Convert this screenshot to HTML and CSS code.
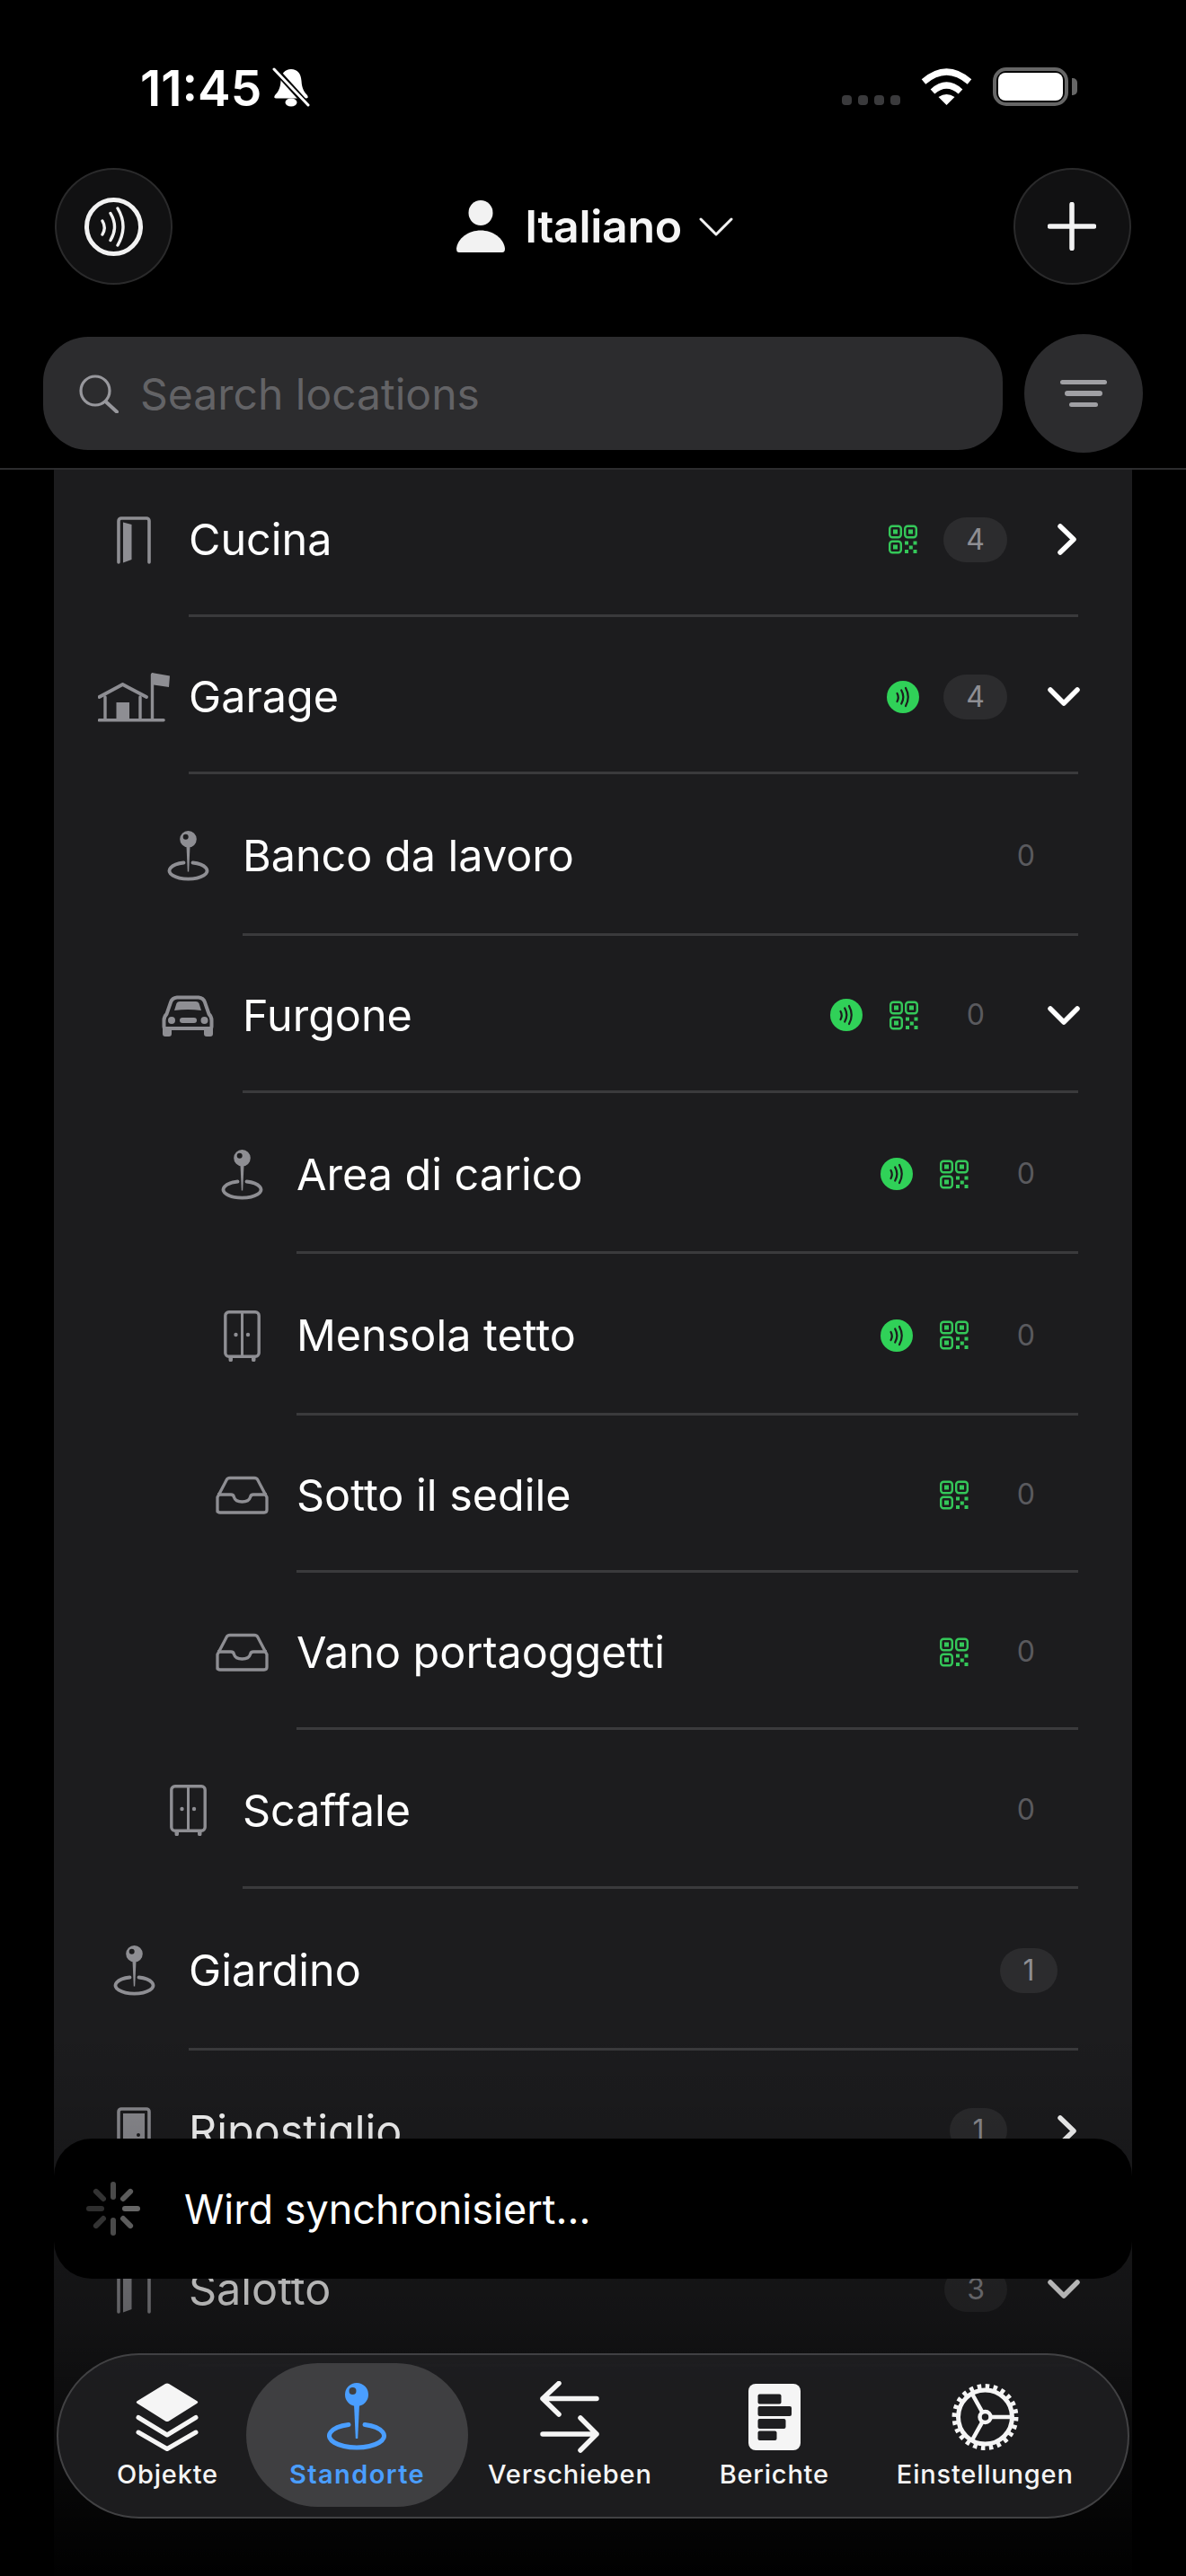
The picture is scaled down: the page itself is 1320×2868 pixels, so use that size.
FILE: index.html
```html
<!DOCTYPE html>
<html lang="it">
<head>
    <meta charset="UTF-8">
    <meta name="viewport" content="width=device-width, initial-scale=1.0">
    <title>Locations</title>
    <link rel="stylesheet" href="styles.css">
</head>
<body>
    <!-- shared icons -->
    <svg class="defs" aria-hidden="true">
        <symbol id="i-door" viewBox="0 0 38 53">
            <path d="M2 51V5a3 3 0 0 1 3-3h28a3 3 0 0 1 3 3v46" fill="none" stroke="currentColor" stroke-width="3.6" stroke-linecap="round"/>
            <path d="M7 6.5 16.5 9v39L7 51.5z" fill="currentColor"/>
        </symbol>
        <symbol id="i-door-closed" viewBox="0 0 38 53">
            <path d="M2 51V5a3 3 0 0 1 3-3h28a3 3 0 0 1 3 3v46" fill="none" stroke="currentColor" stroke-width="3.6"/>
            <path fill-rule="evenodd" d="M7 7h24v46H7zM24 29a2 2 0 1 0 0 4 2 2 0 0 0 0-4z" fill="currentColor"/>
        </symbol>
        <symbol id="i-garage" viewBox="0 0 80 55">
            <g fill="none" stroke="currentColor" stroke-linecap="round">
                <path d="M1.5 27 27.5 13 54 27" stroke-width="3.8" stroke-linejoin="round"/>
                <path d="M8 27v25M47 27v25M60.5 2v50" stroke-width="3.4"/>
                <path d="M1.5 52.8H73" stroke-width="3.6"/>
            </g>
            <path d="M20.5 33H35v19H20.5zM60 0l20 3.500-1 12.500-17-2.500z" fill="currentColor"/>
        </symbol>
        <symbol id="i-pin" viewBox="0 0 47 56">
            <path fill-rule="evenodd" d="M23.500 0a9.300 9.300 0 1 1 0 18.600 9.300 9.300 0 0 1 0-18.600zM20.700 3.800a3 3 0 1 0 0 6 3 3 0 0 0 0-6z" fill="currentColor"/>
            <path d="M21.500 17h4l-1.300 28.500h-1.400z" fill="currentColor"/>
            <path d="M18.500 35.500A21 9.200 0 1 0 28.500 35.500" fill="none" stroke="currentColor" stroke-width="3.800" stroke-linecap="round"/>
        </symbol>
        <symbol id="i-wardrobe" viewBox="0 0 41 57">
            <rect x="1.800" y="1.800" width="37.400" height="49.500" rx="4" fill="none" stroke="currentColor" stroke-width="3.400"/>
            <path d="M20.500 2v49" stroke="currentColor" stroke-width="3"/>
            <circle cx="13.500" cy="27" r="2.200" fill="currentColor"/>
            <circle cx="27" cy="27" r="2.200" fill="currentColor"/>
            <path d="M5.500 51h4.500v4a1.800 1.800 0 0 1-4.500 0zM31 51h4.500v4a1.800 1.800 0 0 1-4.500 0z" fill="currentColor"/>
        </symbol>
        <symbol id="i-tray" viewBox="0 0 59 43">
            <g fill="none" stroke="currentColor" stroke-width="3.300" stroke-linejoin="round">
                <path d="M2 40V24L12 5q1-2.500 4-2.500h27q3 0 4 2.500l10 19v14q0 3-3 3H5q-3 0-3-3z"/>
                <path d="M2 21h15q3 0 3.500 3 1.500 5 9 5t9-5q.5-3 3.500-3h15"/>
            </g>
        </symbol>
        <symbol id="i-car" viewBox="0 0 58 46">
            <path d="M2.500 28q0-4 3-7L10 8q1.500-5 7-5.500h24q5.500.5 7 5.500l4.500 13q3 3 3 7v7q0 2-2.500 2H5q-2.500 0-2.500-2z" fill="none" stroke="currentColor" stroke-width="4"/>
            <path d="M14 17l2.500-8q1-2 3.500-2h18q2.500 0 3.500 2l2.500 8q-15-2-30 0z" fill="currentColor"/>
            <circle cx="11" cy="28" r="4" fill="currentColor"/>
            <circle cx="47.500" cy="28" r="4" fill="currentColor"/>
            <rect x="20" y="25" width="19" height="6" rx="3" fill="currentColor"/>
            <path d="M1 36h10v7q0 3-3 3H4q-3 0-3-3zM47 36h10v7q0 3-3 3h-4q-3 0-3-3z" fill="currentColor"/>
        </symbol>
        <symbol id="i-qr" viewBox="0 0 32 32">
            <g fill="none" stroke="currentColor" stroke-width="2.400">
                <rect x="1.200" y="1.200" width="12.600" height="12.600" rx="3"/>
                <rect x="18.200" y="1.200" width="12.600" height="12.600" rx="3"/>
                <rect x="1.200" y="18.200" width="12.600" height="12.600" rx="3"/>
            </g>
            <path d="M5 5h5v5H5zM22 5h5v5h-5zM5 22h5v5H5zM18 18h4v4h-4zM27.500 18h4v4h-4zM22.800 23h4v4h-4zM18 27.500h4v4h-4zM27.500 27.500h4v4h-4z" fill="currentColor"/>
        </symbol>
        <symbol id="i-nfc" viewBox="0 0 36 36">
            <circle cx="18" cy="18" r="18" fill="#30d158"/>
            <g fill="none" stroke="#1c1c1e" stroke-width="2.200" stroke-linecap="round">
                <path d="M11.500 14q2.500 4.500 0 9M16.200 10.500q4.300 7.500 0 15M21 8q5.500 10 0 20"/>
            </g>
        </symbol>
        <symbol id="i-chev-right" viewBox="0 0 21 35">
            <path d="M3 3l15 14.500L3 32" fill="none" stroke="currentColor" stroke-width="5.500" stroke-linecap="round" stroke-linejoin="round"/>
        </symbol>
        <symbol id="i-chev-down" viewBox="0 0 36 21">
            <path d="M3 3l15 15L33 3" fill="none" stroke="currentColor" stroke-width="5.500" stroke-linecap="round" stroke-linejoin="round"/>
        </symbol>
    </svg>

    <div class="screen">
        <header class="header">
            <div class="status">
                <div class="status-left">
                    <span class="time">11:45</span>
                    <svg class="bell" viewBox="0 0 42 44">
                        <path d="M21 2c-7 0-11 5-11.500 13C9 24 6 28 3 31q-2 3.500 1.500 3.500h33q3.500 0 1.500-3.500c-3-3-6-7-6.500-16C32 7 28 2 21 2z" fill="#fff"/>
                        <ellipse cx="21" cy="39" rx="6.500" ry="4.500" fill="#fff"/>
                        <path d="M1 0l40 44" stroke="#000" stroke-width="7"/>
                        <path d="M2 2l38 40" stroke="#fff" stroke-width="3" stroke-linecap="round"/>
                    </svg>
                </div>
                <div class="status-right">
                    <div class="signal"><i></i><i></i><i></i><i></i></div>
                    <svg class="wifi" viewBox="0 0 57 41">
                        <g fill="none" stroke="#fff" stroke-width="7">
                            <path d="M3 15Q28.500-7 54 15"/>
                            <path d="M13 26Q28.500 12 44 26"/>
                        </g>
                        <path d="M19.500 32q9-6 18 0l-9 9z" fill="#fff"/>
                    </svg>
                    <div class="battery"><div class="battery-fill"></div></div>
                </div>
            </div>

            <div class="topbar">
                <button class="round-btn">
                    <svg class="nfc-icon" viewBox="0 0 65 65">
                        <circle cx="32.500" cy="32.500" r="30" fill="none" stroke="#f2f2f2" stroke-width="5"/>
                        <path d="M20 26q4.500 7.500 0 15M29 17.500q9 15 0 30M37 12q12 20 0 41" fill="none" stroke="#f2f2f2" stroke-width="3.400" stroke-linecap="round"/>
                    </svg>
                </button>
                <div class="title">
                    <svg class="person" viewBox="0 0 54 58">
                        <ellipse cx="27" cy="14" rx="13.500" ry="14" fill="#f2f2f2"/>
                        <path d="M3 58q-3 0-3-4c1-12 14-20.500 27-20.500S53 42 54 54q0 4-3 4z" fill="#f2f2f2"/>
                    </svg>
                    <span>Italiano</span>
                    <svg class="title-chev" viewBox="0 0 38 21">
                        <path d="M2 2l17 17L36 2" fill="none" stroke="#f2f2f2" stroke-width="3" stroke-linecap="round" stroke-linejoin="round"/>
                    </svg>
                </div>
                <button class="round-btn">
                    <svg class="plus" viewBox="0 0 54 54">
                        <path d="M2.500 27h49M27 2.500v49" fill="none" stroke="#f2f2f2" stroke-width="5.500" stroke-linecap="round"/>
                    </svg>
                </button>
            </div>

            <div class="search-row">
                <div class="search">
                    <svg class="search-icon" viewBox="0 0 44 43">
                        <circle cx="18" cy="18" r="16" fill="none" stroke="#98989d" stroke-width="3.200"/>
                        <path d="M29.500 30 42 41.500" stroke="#98989d" stroke-width="4" stroke-linecap="round"/>
                    </svg>
                    <span>Search locations</span>
                </div>
                <button class="filter-btn">
                    <span class="filter-bar bar-1"></span>
                    <span class="filter-bar bar-2"></span>
                    <span class="filter-bar bar-3"></span>
                </button>
            </div>
        </header>

        <main class="list">
            <div class="row">
                <div class="row-icon"><svg class="ic-door"><use href="#i-door"/></svg></div>
                <div class="row-main">
                    <span class="name">Cucina</span>
                    <svg class="qr"><use href="#i-qr"/></svg>
                    <span class="count filled">4</span>
                    <svg class="chev-r"><use href="#i-chev-right"/></svg>
                </div>
            </div>
            <div class="row">
                <div class="row-icon"><svg class="ic-garage"><use href="#i-garage"/></svg></div>
                <div class="row-main">
                    <span class="name">Garage</span>
                    <svg class="nfc solo"><use href="#i-nfc"/></svg>
                    <span class="count filled">4</span>
                    <svg class="chev-d"><use href="#i-chev-down"/></svg>
                </div>
            </div>
            <div class="row lvl-1 tall">
                <div class="row-icon"><svg class="ic-pin"><use href="#i-pin"/></svg></div>
                <div class="row-main">
                    <span class="name">Banco da lavoro</span>
                    <span class="count">0</span>
                </div>
            </div>
            <div class="row lvl-1">
                <div class="row-icon"><svg class="ic-car"><use href="#i-car"/></svg></div>
                <div class="row-main">
                    <span class="name">Furgone</span>
                    <svg class="nfc"><use href="#i-nfc"/></svg>
                    <svg class="qr"><use href="#i-qr"/></svg>
                    <span class="count">0</span>
                    <svg class="chev-d"><use href="#i-chev-down"/></svg>
                </div>
            </div>
            <div class="row lvl-2 tall">
                <div class="row-icon"><svg class="ic-pin"><use href="#i-pin"/></svg></div>
                <div class="row-main">
                    <span class="name">Area di carico</span>
                    <svg class="nfc"><use href="#i-nfc"/></svg>
                    <svg class="qr"><use href="#i-qr"/></svg>
                    <span class="count">0</span>
                </div>
            </div>
            <div class="row lvl-2 tall">
                <div class="row-icon"><svg class="ic-wardrobe"><use href="#i-wardrobe"/></svg></div>
                <div class="row-main">
                    <span class="name">Mensola tetto</span>
                    <svg class="nfc"><use href="#i-nfc"/></svg>
                    <svg class="qr"><use href="#i-qr"/></svg>
                    <span class="count">0</span>
                </div>
            </div>
            <div class="row lvl-2">
                <div class="row-icon"><svg class="ic-tray"><use href="#i-tray"/></svg></div>
                <div class="row-main">
                    <span class="name">Sotto il sedile</span>
                    <svg class="qr"><use href="#i-qr"/></svg>
                    <span class="count">0</span>
                </div>
            </div>
            <div class="row lvl-2">
                <div class="row-icon"><svg class="ic-tray"><use href="#i-tray"/></svg></div>
                <div class="row-main">
                    <span class="name">Vano portaoggetti</span>
                    <svg class="qr"><use href="#i-qr"/></svg>
                    <span class="count">0</span>
                </div>
            </div>
            <div class="row lvl-1 mid">
                <div class="row-icon"><svg class="ic-wardrobe"><use href="#i-wardrobe"/></svg></div>
                <div class="row-main">
                    <span class="name">Scaffale</span>
                    <span class="count">0</span>
                </div>
            </div>
            <div class="row tall">
                <div class="row-icon"><svg class="ic-pin"><use href="#i-pin"/></svg></div>
                <div class="row-main">
                    <span class="name">Giardino</span>
                    <span class="count filled">1</span>
                </div>
            </div>
            <div class="row mid">
                <div class="row-icon"><svg class="ic-door"><use href="#i-door-closed"/></svg></div>
                <div class="row-main">
                    <span class="name">Ripostiglio</span>
                    <span class="count filled">1</span>
                    <svg class="chev-r"><use href="#i-chev-right"/></svg>
                </div>
            </div>
            <div class="row">
                <div class="row-icon"><svg class="ic-door"><use href="#i-door"/></svg></div>
                <div class="row-main">
                    <span class="name">Salotto</span>
                    <span class="count filled">3</span>
                    <svg class="chev-d"><use href="#i-chev-down"/></svg>
                </div>
            </div>
        </main>

        <div class="fade"></div>

        <div class="toast">
            <svg class="spinner" viewBox="0 0 60 60">
                <g stroke-width="6" stroke-linecap="round">
                    <path d="M30 3v14" stroke="#4a4a4a"/>
                    <path d="M49.100 10.900 41 19" stroke="#5c5c5c"/>
                    <path d="M57 30H43" stroke="#666"/>
                    <path d="M49.100 49.100 41 41" stroke="#5c5c5c"/>
                    <path d="M30 57V43" stroke="#4a4a4a"/>
                    <path d="M10.900 49.100 19 41" stroke="#333"/>
                    <path d="M3 30h14" stroke="#2e2e2e"/>
                    <path d="M10.900 10.900 19 19" stroke="#333"/>
                </g>
            </svg>
            <span>Wird synchronisiert...</span>
        </div>

        <nav class="tabbar">
            <div class="tab">
                <svg class="tab-icon" width="70" height="76" viewBox="0 0 70 76">
                    <path d="M33 1a4 4 0 0 1 4 0l31 19q2.500 1.500 0 3L37 42.500a4 4 0 0 1-4 0L2 23q-2.500-1.500 0-3z" fill="#f5f5f5"/>
                    <path d="M3 38.500 35 58l32-19.500M3 55 35 73.500 67 55" fill="none" stroke="#f5f5f5" stroke-width="5" stroke-linecap="round" stroke-linejoin="round"/>
                </svg>
                <span>Objekte</span>
            </div>
            <div class="tab active">
                <svg class="tab-icon" width="67" height="76" viewBox="0 0 67 76">
                    <path fill-rule="evenodd" d="M33 0a13 13 0 1 1 0 26 13 13 0 0 1 0-26zM28.500 5a4 4 0 1 0 0 8 4 4 0 0 0 0-8z" fill="#4a9eff"/>
                    <path d="M30 24h6l-1.800 38h-2.400z" fill="#4a9eff"/>
                    <path d="M24 46.500A30.500 13 0 1 0 42 46.500" fill="none" stroke="#4a9eff" stroke-width="5" stroke-linecap="round"/>
                </svg>
                <span>Standorte</span>
            </div>
            <div class="tab">
                <svg class="tab-icon" width="66" height="80" viewBox="0 0 66 80">
                    <path d="M3 19.500h60M21 2.500 3 19.500 21 37M3 59h60M45 41l18 18-18 18" fill="none" stroke="#f5f5f5" stroke-width="5.500" stroke-linecap="round" stroke-linejoin="round"/>
                </svg>
                <span>Verschieben</span>
            </div>
            <div class="tab">
                <svg class="tab-icon" width="58" height="74" viewBox="0 0 58 74">
                    <rect width="58" height="74" rx="8" fill="#f5f5f5"/>
                    <g fill="#1e1e20">
                        <rect x="10.500" y="11.500" width="26" height="11" rx="2"/>
                        <rect x="10.500" y="25" width="37.500" height="11" rx="2"/>
                        <rect x="10.500" y="39" width="31" height="11" rx="2"/>
                        <rect x="10.500" y="52.500" width="21" height="10.500" rx="2"/>
                    </g>
                </svg>
                <span>Berichte</span>
            </div>
            <div class="tab">
                <svg class="tab-icon" width="75" height="74" viewBox="0 0 75 74">
                    <g fill="none" stroke="#f5f5f5">
                        <circle cx="37.500" cy="37" r="30" stroke-width="5"/>
                        <circle cx="37.500" cy="37" r="34.200" stroke-width="5.500" stroke-dasharray="4.500 4.450"/>
                        <circle cx="37.500" cy="37" r="6" stroke-width="4.500"/>
                        <path d="M43.500 37H67M34.500 31.800 22.800 11M34.500 42.200 22.800 63" stroke-width="4.500"/>
                    </g>
                </svg>
                <span>Einstellungen</span>
            </div>
        </nav>
    </div>
</body>
</html>
```

FILE: styles.css
```css
* {
    box-sizing: border-box;
}
html, body {
    margin: 0;
    background: #000;
}
body {
    font-family: Inter, "Noto Sans", sans-serif;
    color: #fff;
}
button {
    border: none;
    padding: 0;
    font: inherit;
    color: inherit;
}
.defs {
    position: absolute;
    width: 0;
    height: 0;
}
.screen {
    position: relative;
    display: flex;
    flex-direction: column;
    width: 1320px;
    height: 2868px;
    overflow: hidden;
    background: #000;
}

/* header */
.header {
    position: relative;
    z-index: 2;
    flex: none;
    height: 523px;
    background: #000;
    border-bottom: 2px solid #2c2c2e;
}
.status {
    display: flex;
    justify-content: space-between;
    height: 187px;
    padding: 75px 131px 0 156px;
}
.status-left {
    display: flex;
    align-items: flex-start;
    gap: 12px;
}
.time {
    font-size: 55px;
    font-weight: 600;
    line-height: 46px;
}
.bell {
    width: 42px;
    height: 44px;
}
.status-right {
    display: flex;
    align-items: flex-start;
}
.signal {
    display: flex;
    gap: 7px;
    margin-top: 31px;
    margin-right: 23px;
}
.signal i {
    width: 11px;
    height: 11px;
    border-radius: 4px;
    background: #3a3a3c;
}
.wifi {
    width: 57px;
    height: 41px;
    margin-top: 1px;
    margin-right: 23px;
}
.battery {
    position: relative;
    width: 84px;
    height: 43px;
    padding: 2px;
    border: 4px solid #666;
    border-radius: 15px;
}
.battery::after {
    content: "";
    position: absolute;
    top: 8px;
    right: -14px;
    width: 6px;
    height: 19px;
    border-radius: 0 5px 5px 0;
    background: #666;
}
.battery-fill {
    height: 100%;
    border-radius: 8px;
    background: #fff;
}
.topbar {
    display: flex;
    justify-content: space-between;
    align-items: center;
    height: 130px;
    padding: 0 61px;
}
.round-btn {
    display: flex;
    align-items: center;
    justify-content: center;
    width: 131px;
    height: 130px;
    border-radius: 50%;
    background: #111112;
    border: 2px solid #2a2a2b;
}
.nfc-icon {
    width: 65px;
    height: 65px;
}
.plus {
    width: 54px;
    height: 54px;
}
.title {
    display: flex;
    align-items: center;
    margin-left: 4px;
    font-size: 50px;
    font-weight: 600;
    letter-spacing: -0.3px;
    color: #f5f5f5;
}
.person {
    width: 54px;
    height: 58px;
    margin-right: 22px;
}
.title-chev {
    width: 38px;
    height: 21px;
    margin-left: 19px;
}
.search-row {
    display: flex;
    align-items: center;
    gap: 24px;
    margin-top: 55px;
    padding: 0 48px;
}
.search {
    display: flex;
    align-items: center;
    flex: 1;
    height: 126px;
    padding-left: 40px;
    border-radius: 50px;
    background: #2c2c2e;
    font-size: 48px;
    color: #636366;
}
.search-icon {
    width: 44px;
    height: 43px;
    margin-right: 24px;
}
.filter-btn {
    display: flex;
    flex-direction: column;
    align-items: center;
    justify-content: center;
    gap: 7px;
    width: 132px;
    height: 132px;
    border-radius: 50%;
    background: #2c2c2e;
}
.filter-bar {
    height: 5.500px;
    border-radius: 3px;
    background: #a0a0a4;
}
.bar-1 {
    width: 52px;
}
.bar-2 {
    width: 42px;
}
.bar-3 {
    width: 32px;
}

/* location list */
.list {
    flex: 1;
    margin: -11px 60px 0;
    background: #1c1c1e;
}
.row {
    display: flex;
    height: 175px;
    padding-left: 49px;
}
.row.tall {
    height: 179.500px;
}
.row.mid {
    height: 177.500px;
}
.row.lvl-1 {
    padding-left: 109px;
}
.row.lvl-2 {
    padding-left: 169px;
}
.row-icon {
    display: flex;
    align-items: center;
    justify-content: center;
    flex: none;
    width: 80px;
    margin-right: 21px;
    padding-top: 3px;
    color: #8e8e93;
}
.row-main {
    display: flex;
    align-items: center;
    flex: 1;
    margin-right: 60px;
    padding: 5px 23px 0 0;
    border-bottom: 3px solid #3a3a3c;
}
.name {
    flex: 1;
    font-size: 48.500px;
}
.count {
    min-width: 64px;
    height: 50px;
    margin-left: 29px;
    padding: 0 25px;
    border-radius: 25px;
    font-size: 32px;
    line-height: 50px;
    text-align: center;
    color: #5a5a5e;
}
.count.filled {
    background: #2c2c2e;
    color: #8e8e93;
}
.qr {
    width: 32px;
    height: 33px;
    margin-left: 30px;
    color: #34c759;
}
.nfc {
    width: 36px;
    height: 36px;
    color: #30d158;
}
.nfc.solo {
    margin-right: -2px;
}
.chev-r {
    width: 21px;
    height: 35px;
    margin-left: 56px;
    margin-right: -21px;
    color: #fff;
}
.chev-d {
    width: 36px;
    height: 21px;
    margin-left: 45px;
    margin-right: -25px;
    color: #fff;
}
.ic-door {
    width: 38px;
    height: 53px;
}
.ic-garage {
    width: 80px;
    height: 55px;
}
.ic-pin {
    width: 47px;
    height: 56px;
}
.ic-wardrobe {
    width: 41px;
    height: 57px;
}
.ic-tray {
    width: 59px;
    height: 43px;
}
.ic-car {
    width: 58px;
    height: 46px;
}

/* overlays at the bottom of the screen */
.fade {
    position: absolute;
    left: 0;
    right: 0;
    bottom: 0;
    height: 610px;
    background: linear-gradient(to bottom, rgba(0, 0, 0, 0) 0%, rgba(0, 0, 0, 0.32) 52%, rgba(0, 0, 0, 0.85) 90%, rgba(0, 0, 0, 0.97) 100%);
}
.toast {
    position: absolute;
    left: 60px;
    top: 2381px;
    display: flex;
    align-items: center;
    width: 1200px;
    height: 156px;
    padding-left: 36px;
    border-radius: 42px;
    background: #000;
    font-size: 45px;
}
.spinner {
    width: 60px;
    height: 60px;
    margin-right: 49px;
}
.tabbar {
    position: absolute;
    left: 63px;
    top: 2620px;
    display: flex;
    gap: 75px;
    width: 1194px;
    height: 184px;
    padding: 29px 0 0 65px;
    border: 2px solid rgba(110, 110, 112, 0.45);
    border-radius: 92px;
    background: rgba(30, 30, 32, 0.94);
}
.tab {
    position: relative;
    display: flex;
    flex-direction: column;
    align-items: center;
    font-size: 29px;
    font-weight: 500;
    letter-spacing: 0.8px;
    line-height: 36px;
    color: #f5f5f5;
}
.tab-icon {
    position: relative;
    height: 80px;
    margin-bottom: 6px;
}
.tab span {
    position: relative;
}
.tab.active {
    margin: 0 -5px 0 4px;
    color: #4a9eff;
    font-weight: 600;
    letter-spacing: 1.4px;
}
.tab.active::before {
    content: "";
    position: absolute;
    top: -20px;
    left: -48px;
    right: -48px;
    height: 160px;
    border-radius: 80px;
    background: #3f3f41;
}
```
